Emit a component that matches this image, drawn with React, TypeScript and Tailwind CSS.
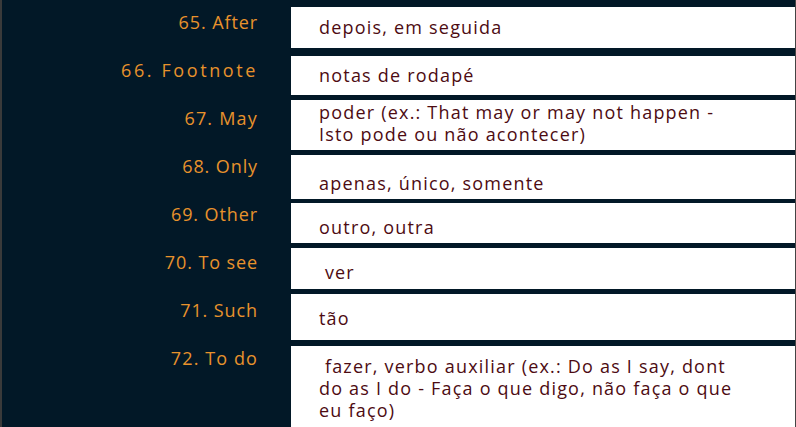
const rows = [
  { lines: ["depois, em seguida"], cls: "mt-[7px] h-[41px] pt-[9px]" },
  { lines: ["notas de rodapé"], cls: "mt-[8px] h-[39px] pt-[8px]" },
  { lines: ["poder (ex.: That may or may not happen -", "Isto pode ou não acontecer)"], cls: "mt-[5px] h-[50px] pt-[1px]" },
  { lines: ["apenas, único, somente"], cls: "mt-[5px] h-[44px] pt-[17px]" },
  { lines: ["outro, outra"], cls: "mt-[4px] h-[40px] pt-[13px]" },
  { lines: ["\u00a0ver"], cls: "mt-[5px] h-[41px] pt-[13px]" },
  { lines: ["tão"], cls: "mt-[5px] h-[46px] pt-[13px]" },
  {
    lines: ["\u00a0fazer, verbo auxiliar (ex.: Do as I say, dont", "do as I do - Faça o que digo, não faça o que", "eu faço)"],
    cls: "mt-[6px] h-[90px] pt-[9px]",
  },
];

const labels = [
  { t: "65. After", cls: "tracking-[0.9px]" },
  { t: "66. Footnote", cls: "tracking-[2.6px]" },
  { t: "67. May", cls: "tracking-[1.2px]" },
  { t: "68. Only", cls: "tracking-[0.9px]" },
  { t: "69. Other", cls: "tracking-[0.9px]" },
  { t: "70. To see", cls: "tracking-[0.9px]" },
  { t: "71. Such", cls: "tracking-[0.9px]" },
  { t: "72. To do", cls: "tracking-[1.1px]" },
];

export default function App() {
  return (
    <div
      className="h-[427px] w-[796px] overflow-hidden bg-[#021827] flex border-l-2 border-l-[#3a3a3a] border-r border-r-[#444]"
      style={{ fontFamily: '"Open Sans", sans-serif' }}
    >
      {/* labels */}
      <div className="w-[289px] shrink-0 pt-[11px] pr-[33px] flex flex-col items-end">
        {labels.map((l) => (
          <div key={l.t} className={`h-[48px] text-[18px] leading-[22px] text-[#e8922c] whitespace-nowrap ${l.cls}`}>
            {l.t}
          </div>
        ))}
      </div>
      {/* traducoes */}
      <div className="flex-1 flex flex-col">
        {rows.map((r, i) => (
          <div key={i} className={`bg-white shrink-0 pl-[28px] text-[18px] tracking-[1.2px] leading-[22px] text-[#4d0b12] ${r.cls}`}>
            {r.lines.map((t, j) => (
              <div key={j} className="whitespace-nowrap">{t}</div>
            ))}
          </div>
        ))}
      </div>
    </div>
  );
}
